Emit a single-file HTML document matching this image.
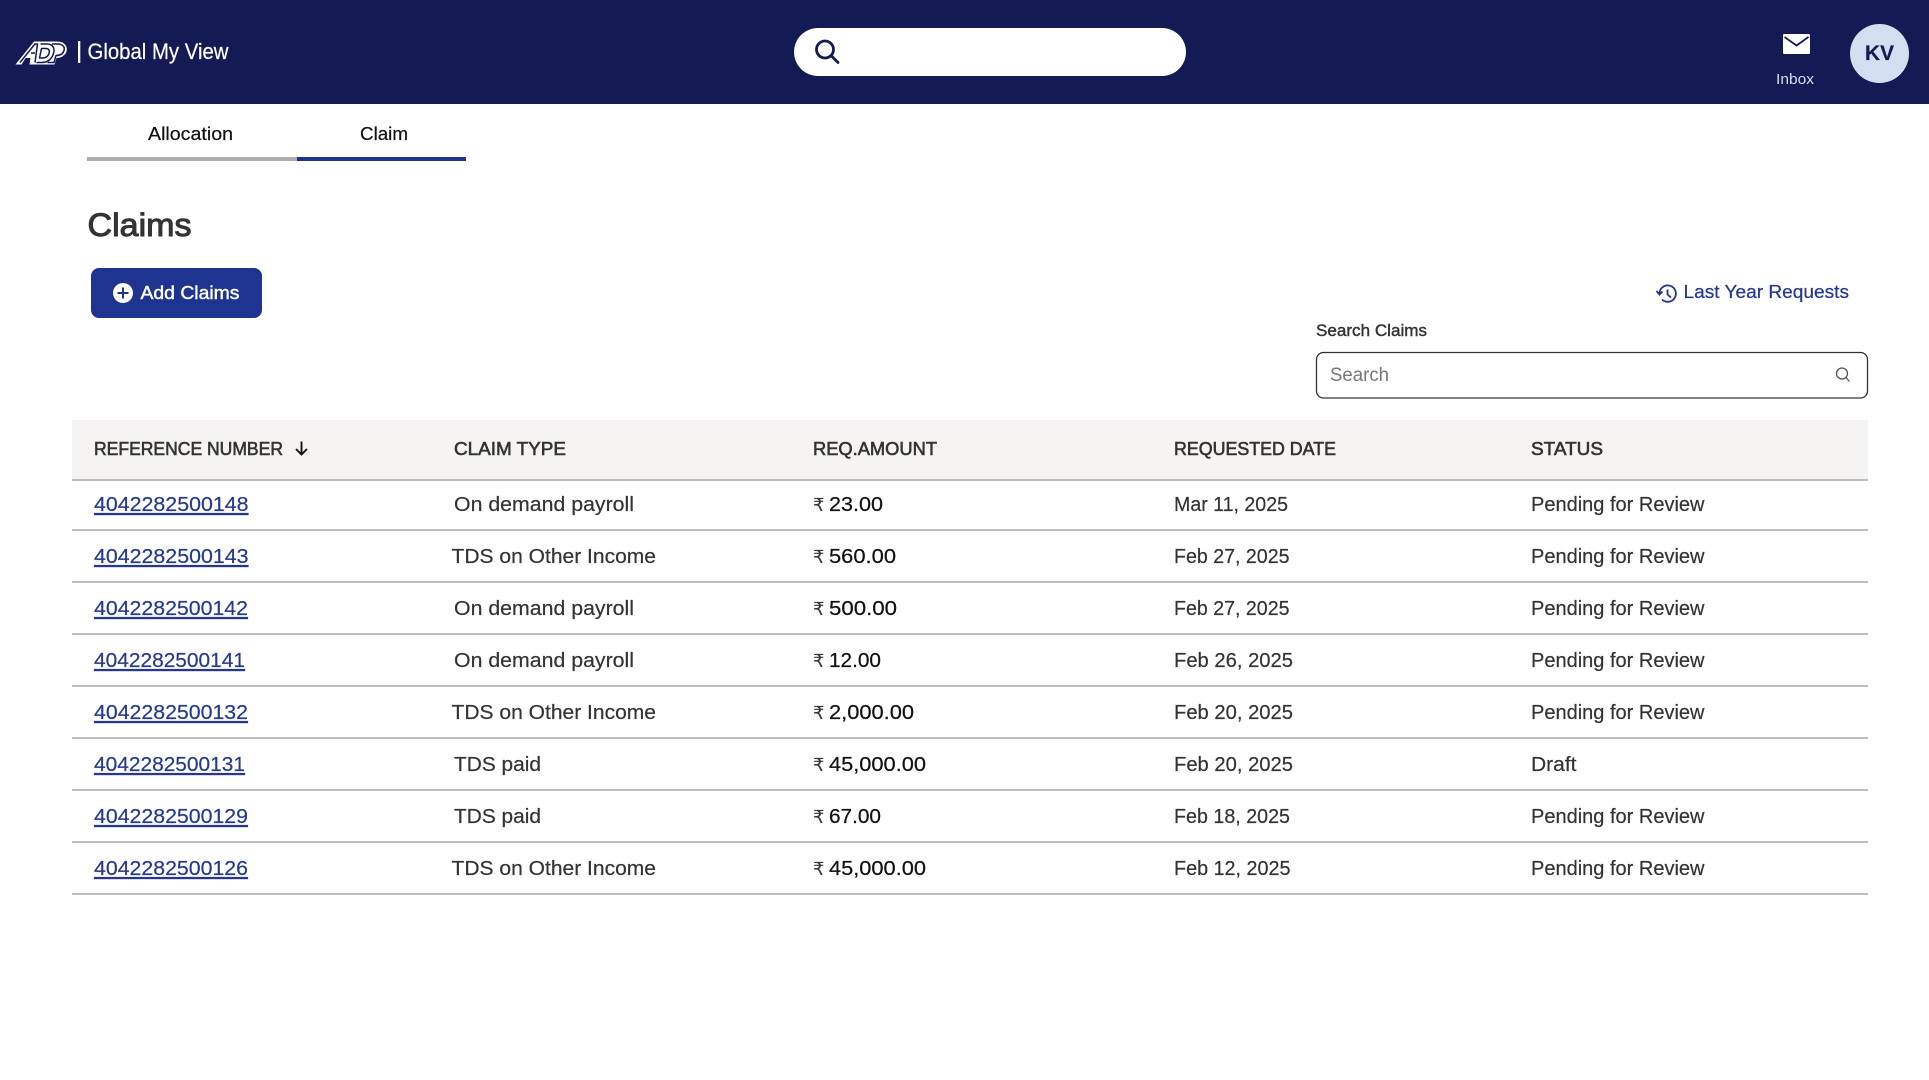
<!DOCTYPE html>
<html lang="en"><head><meta charset="utf-8"><title>Claims</title>
<style>
html,body{margin:0;padding:0;background:#fff;overflow:hidden}
svg{display:block}
text{font-family:"Liberation Sans","DejaVu Sans",sans-serif;white-space:pre}
.cell{font-size:20.5px;fill:#333;stroke:#333;stroke-width:.2}
.rs{font-size:18px;fill:#333}
.amt{font-size:20.5px;fill:#111;stroke:#111;stroke-width:.22}
.link{font-size:20.5px;fill:#25398f;stroke:#25398f;stroke-width:.2}
.th{font-size:18.5px;fill:#333;stroke:#333;stroke-width:.6}
</style></head>
<body>
<svg xmlns="http://www.w3.org/2000/svg" width="1929" height="1080" viewBox="0 0 1929 1080">
<rect width="1929" height="1080" fill="#fff"/>
<rect width="1929" height="104" fill="#141b54"/>
<path d="M15.500 64.500 L34 41.500 H57 C65 41.500 68 47 66.500 51.500 C65 56 60.500 58 56.500 58 L54.500 64.500 H29.500 L30.500 58 H25.500 L21.500 64.500 Z" fill="#fff"/>
<g fill="none" stroke="#141b54" stroke-width="1.500" stroke-linejoin="round">
<path d="M20 62.500 L35 44 H37.500 L35 62.500"/>
<path d="M31 53 H35"/>
<path d="M40.500 44 H47 C53 44 55 48.500 53.500 53.500 C52 58.500 48 62.500 42 62.500 H36.500"/>
<path d="M41.500 48.500 H46 C49 48.500 50 51 49 53.500 C48 56.500 45.500 58 42.500 58 H39.500 Z"/>
<path d="M52 44 H58 C63 44 65 47.500 64 50.500 C63 54 60 55.500 56 55.500 L54 62.500 H47.500"/>
</g>
<rect x="78" y="41" width="2.300" height="22" fill="#fff"/>
<text x="87.500" y="59" font-size="22" fill="#fff" stroke="#fff" stroke-width=".2" textLength="141" lengthAdjust="spacingAndGlyphs">Global My View</text>

<rect x="794" y="28" width="392" height="48" rx="24" fill="#fff"/>
<circle cx="825" cy="49.500" r="8.500" fill="none" stroke="#141b54" stroke-width="2.800"/>
<path d="M831.500 56 L838 62.500" stroke="#141b54" stroke-width="2.800" stroke-linecap="round"/>

<rect x="1783" y="34" width="27" height="20" rx="1" fill="#fff"/>
<path d="M1784.500 37 L1796.500 45.500 L1808.500 37" fill="none" stroke="#141b54" stroke-width="1.800"/>
<text x="1776" y="84" font-size="15" fill="#d3dff1" textLength="38" lengthAdjust="spacingAndGlyphs">Inbox</text>
<circle cx="1879.500" cy="53.500" r="29.500" fill="#d3dff1"/>
<text x="1865" y="60" font-size="21" font-weight="700" fill="#141b54" stroke="#141b54" stroke-width=".2" textLength="29" lengthAdjust="spacingAndGlyphs">KV</text>

<text x="148" y="140" font-size="18.500" fill="#111" stroke="#111" stroke-width=".2" textLength="85" lengthAdjust="spacingAndGlyphs">Allocation</text>
<text x="360" y="140" font-size="18.500" fill="#111" stroke="#111" stroke-width=".2" textLength="48" lengthAdjust="spacingAndGlyphs">Claim</text>
<rect x="87" y="157" width="210" height="4" fill="#adadad"/>
<rect x="297" y="157" width="169" height="4" fill="#1f3390"/>

<text x="87.500" y="236" font-size="32.500" fill="#333" stroke="#333" stroke-width="1" textLength="104" lengthAdjust="spacingAndGlyphs">Claims</text>

<rect x="91" y="268" width="171" height="50" rx="8" fill="#1f3390"/>
<circle cx="123" cy="293" r="10" fill="#fff"/>
<path d="M123 287.500 V298.500 M117.500 293 H128.500" stroke="#1f3390" stroke-width="2"/>
<text x="140.500" y="299" font-size="18.500" fill="#fff" stroke="#fff" stroke-width=".45" textLength="99" lengthAdjust="spacingAndGlyphs">Add Claims</text>

<g fill="none" stroke="#1f3390" stroke-width="1.800">
<path d="M1659.500 293.500 A8.200 8.200 0 1 1 1662 299.500"/>
<path d="M1656.500 291 L1659.500 294.500 L1662.500 291.500"/>
<path d="M1667.500 289.500 V294.500 L1671 297.500"/>
</g>
<text x="1683.500" y="298" font-size="18.500" fill="#25398f" stroke="#25398f" stroke-width=".25" textLength="165.500" lengthAdjust="spacingAndGlyphs">Last Year Requests</text>

<text x="1316" y="336" font-size="16.500" fill="#333" stroke="#333" stroke-width=".4" textLength="111" lengthAdjust="spacingAndGlyphs">Search Claims</text>
<rect x="1316.500" y="352.500" width="551" height="45.500" rx="7" fill="#fff" stroke="#333" stroke-width="1.300"/>
<text x="1330" y="381" font-size="19" fill="#777" textLength="59" lengthAdjust="spacingAndGlyphs">Search</text>
<circle cx="1842" cy="373.500" r="5.500" fill="none" stroke="#555" stroke-width="1.300"/>
<path d="M1846 377.500 L1849.500 381.500" stroke="#555" stroke-width="1.300"/>

<rect x="72" y="420" width="1796" height="59" fill="#f5f4f2"/>
<g fill="#bdbdbd">
<rect x="72" y="479" width="1796" height="2"/>
<rect x="72" y="529" width="1796" height="2"/>
<rect x="72" y="581" width="1796" height="2"/>
<rect x="72" y="633" width="1796" height="2"/>
<rect x="72" y="685" width="1796" height="2"/>
<rect x="72" y="737" width="1796" height="2"/>
<rect x="72" y="789" width="1796" height="2"/>
<rect x="72" y="841" width="1796" height="2"/>
<rect x="72" y="893" width="1796" height="2"/>
</g>

<text class="th" x="94" y="455" textLength="189" lengthAdjust="spacingAndGlyphs">REFERENCE NUMBER</text>
<path d="M301.500 441.500 V454 M296 449 L301.500 454.500 L307 449" fill="none" stroke="#111" stroke-width="1.900"/>
<text class="th" x="454" y="455" textLength="112" lengthAdjust="spacingAndGlyphs">CLAIM TYPE</text>
<text class="th" x="813" y="455" textLength="124" lengthAdjust="spacingAndGlyphs">REQ.AMOUNT</text>
<text class="th" x="1174" y="455" textLength="162" lengthAdjust="spacingAndGlyphs">REQUESTED DATE</text>
<text class="th" x="1531" y="455" textLength="72" lengthAdjust="spacingAndGlyphs">STATUS</text>

<g>
<text class="link" x="94" y="511" textLength="154.500" lengthAdjust="spacingAndGlyphs" text-decoration="underline">4042282500148</text>
<text class="cell" x="454" y="511" textLength="180" lengthAdjust="spacingAndGlyphs">On demand payroll</text>
<text class="rs" x="813" y="511">₹</text>
<text class="amt" x="829" y="511" textLength="54" lengthAdjust="spacingAndGlyphs">23.00</text>
<text class="cell" x="1174" y="511" textLength="114" lengthAdjust="spacingAndGlyphs">Mar 11, 2025</text>
<text class="cell" x="1531" y="511" textLength="173.500" lengthAdjust="spacingAndGlyphs">Pending for Review</text>

<text class="link" x="94" y="563" textLength="154.500" lengthAdjust="spacingAndGlyphs" text-decoration="underline">4042282500143</text>
<text class="cell" x="451.500" y="563" textLength="204.500" lengthAdjust="spacingAndGlyphs">TDS on Other Income</text>
<text class="rs" x="813" y="563">₹</text>
<text class="amt" x="829" y="563" textLength="67" lengthAdjust="spacingAndGlyphs">560.00</text>
<text class="cell" x="1174" y="563" textLength="115.500" lengthAdjust="spacingAndGlyphs">Feb 27, 2025</text>
<text class="cell" x="1531" y="563" textLength="173.500" lengthAdjust="spacingAndGlyphs">Pending for Review</text>

<text class="link" x="94" y="615" textLength="154" lengthAdjust="spacingAndGlyphs" text-decoration="underline">4042282500142</text>
<text class="cell" x="454" y="615" textLength="180" lengthAdjust="spacingAndGlyphs">On demand payroll</text>
<text class="rs" x="813" y="615">₹</text>
<text class="amt" x="829" y="615" textLength="68" lengthAdjust="spacingAndGlyphs">500.00</text>
<text class="cell" x="1174" y="615" textLength="115.500" lengthAdjust="spacingAndGlyphs">Feb 27, 2025</text>
<text class="cell" x="1531" y="615" textLength="173.500" lengthAdjust="spacingAndGlyphs">Pending for Review</text>

<text class="link" x="94" y="667" textLength="151" lengthAdjust="spacingAndGlyphs" text-decoration="underline">4042282500141</text>
<text class="cell" x="454" y="667" textLength="180" lengthAdjust="spacingAndGlyphs">On demand payroll</text>
<text class="rs" x="813" y="667">₹</text>
<text class="amt" x="829" y="667" textLength="52" lengthAdjust="spacingAndGlyphs">12.00</text>
<text class="cell" x="1174" y="667" textLength="119" lengthAdjust="spacingAndGlyphs">Feb 26, 2025</text>
<text class="cell" x="1531" y="667" textLength="173.500" lengthAdjust="spacingAndGlyphs">Pending for Review</text>

<text class="link" x="94" y="719" textLength="154" lengthAdjust="spacingAndGlyphs" text-decoration="underline">4042282500132</text>
<text class="cell" x="451.500" y="719" textLength="204.500" lengthAdjust="spacingAndGlyphs">TDS on Other Income</text>
<text class="rs" x="813" y="719">₹</text>
<text class="amt" x="829" y="719" textLength="85" lengthAdjust="spacingAndGlyphs">2,000.00</text>
<text class="cell" x="1174" y="719" textLength="119" lengthAdjust="spacingAndGlyphs">Feb 20, 2025</text>
<text class="cell" x="1531" y="719" textLength="173.500" lengthAdjust="spacingAndGlyphs">Pending for Review</text>

<text class="link" x="94" y="771" textLength="151" lengthAdjust="spacingAndGlyphs" text-decoration="underline">4042282500131</text>
<text class="cell" x="454" y="771" textLength="87" lengthAdjust="spacingAndGlyphs">TDS paid</text>
<text class="rs" x="813" y="771">₹</text>
<text class="amt" x="829" y="771" textLength="97" lengthAdjust="spacingAndGlyphs">45,000.00</text>
<text class="cell" x="1174" y="771" textLength="119" lengthAdjust="spacingAndGlyphs">Feb 20, 2025</text>
<text class="cell" x="1531" y="771" textLength="45.500" lengthAdjust="spacingAndGlyphs">Draft</text>

<text class="link" x="94" y="823" textLength="154" lengthAdjust="spacingAndGlyphs" text-decoration="underline">4042282500129</text>
<text class="cell" x="454" y="823" textLength="87" lengthAdjust="spacingAndGlyphs">TDS paid</text>
<text class="rs" x="813" y="823">₹</text>
<text class="amt" x="829" y="823" textLength="52" lengthAdjust="spacingAndGlyphs">67.00</text>
<text class="cell" x="1174" y="823" textLength="116" lengthAdjust="spacingAndGlyphs">Feb 18, 2025</text>
<text class="cell" x="1531" y="823" textLength="173.500" lengthAdjust="spacingAndGlyphs">Pending for Review</text>

<text class="link" x="94" y="875" textLength="154" lengthAdjust="spacingAndGlyphs" text-decoration="underline">4042282500126</text>
<text class="cell" x="451.500" y="875" textLength="204.500" lengthAdjust="spacingAndGlyphs">TDS on Other Income</text>
<text class="rs" x="813" y="875">₹</text>
<text class="amt" x="829" y="875" textLength="97" lengthAdjust="spacingAndGlyphs">45,000.00</text>
<text class="cell" x="1174" y="875" textLength="116.500" lengthAdjust="spacingAndGlyphs">Feb 12, 2025</text>
<text class="cell" x="1531" y="875" textLength="173.500" lengthAdjust="spacingAndGlyphs">Pending for Review</text>
</g>
</svg>
</body></html>
